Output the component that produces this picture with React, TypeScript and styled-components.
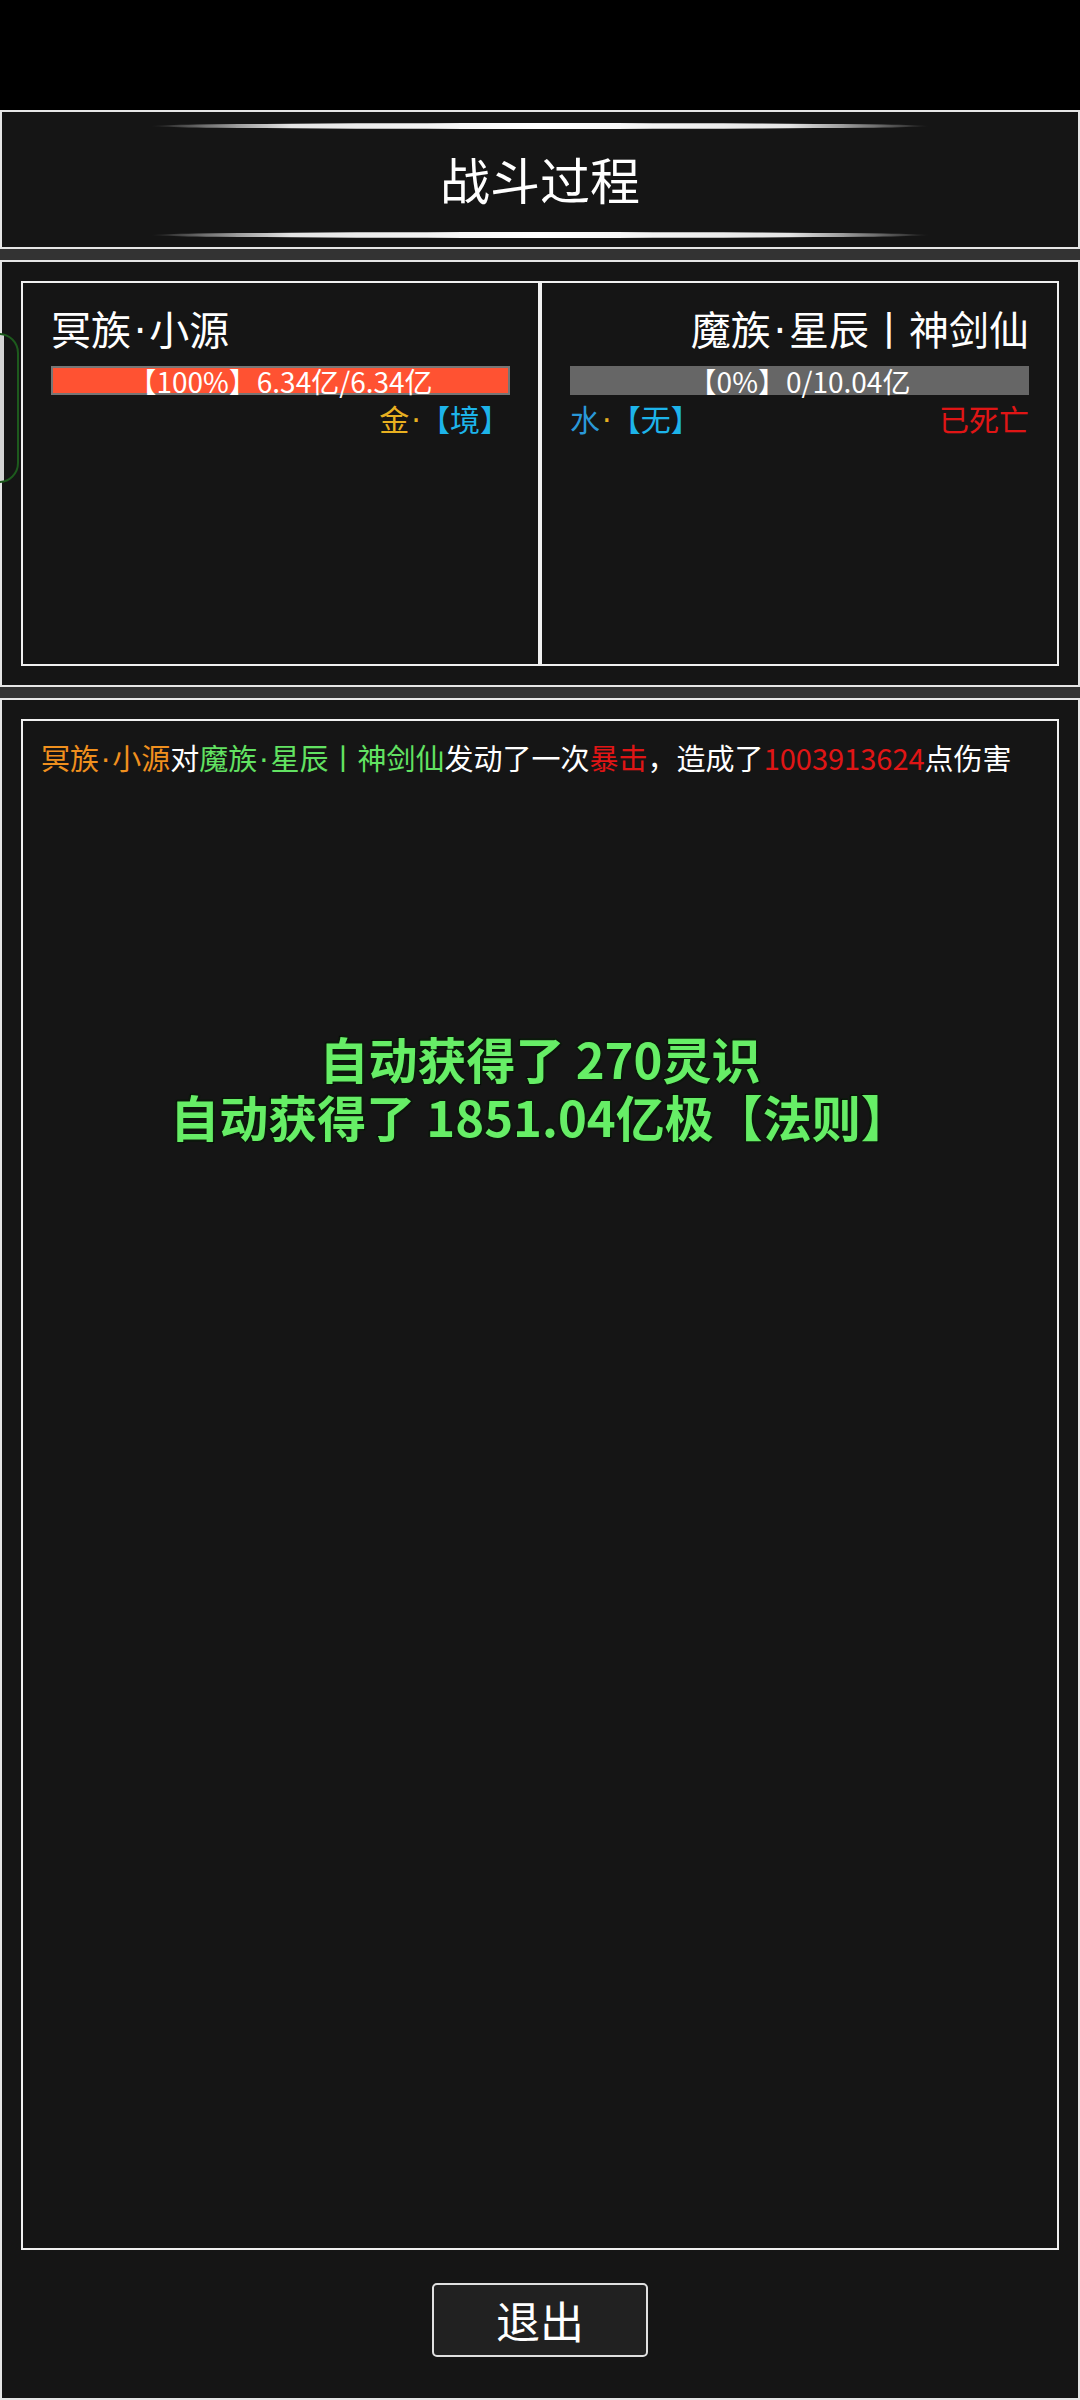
import React from "react";
import styled, { createGlobalStyle } from "styled-components";

const GlobalStyle = createGlobalStyle`
  html, body {
    margin: 0;
    padding: 0;
    background: #000;
  }
  body {
    font-family: "Noto Sans CJK SC", "Noto Sans", sans-serif;
  }
  #root {
    width: 1080px;
    height: 2400px;
    overflow: hidden;
  }
`;

const Page = styled.div`
  position: relative;
  width: 1080px;
  height: 2400px;
  box-sizing: border-box;
  padding-top: 110px;
  background: #000;
  display: flex;
  flex-direction: column;
`;

const Stack = styled.div`
  flex: 1;
  min-height: 0;
  background: #333;
  display: flex;
  flex-direction: column;
  gap: 11px;
`;

const Panel = styled.section`
  box-sizing: border-box;
  background: #151515;
  border: 2px solid #e6e6e6;
`;

const HeaderPanel = styled(Panel)`
  height: 139px;
  padding: 11px 0 9px;
  display: flex;
  flex-direction: column;
  align-items: center;
`;

const GlowLine = styled.div`
  width: 778px;
  height: 6px;
  border-radius: 50%;
  background: linear-gradient(
    90deg,
    rgba(255, 255, 255, 0) 0%,
    rgba(190, 190, 190, 0.55) 7%,
    rgba(240, 240, 240, 0.95) 18%,
    #fff 50%,
    rgba(240, 240, 240, 0.95) 82%,
    rgba(190, 190, 190, 0.55) 93%,
    rgba(255, 255, 255, 0) 100%
  );
`;

const Title = styled.h1`
  margin: 0;
  height: 103px;
  box-sizing: border-box;
  padding-bottom: 5px;
  line-height: 98px;
  font-size: 50px;
  font-weight: 400;
  color: #fff;
`;

const BattlePanel = styled(Panel)`
  height: 427px;
  padding: 19px;
`;

const Fighters = styled.div`
  display: grid;
  grid-template-columns: 1fr 1fr;
  height: 100%;
`;

const FighterCard = styled.div`
  box-sizing: border-box;
  border: 2px solid #f0f0f0;
  padding: 20px 28px 0;
  display: flex;
  flex-direction: column;
`;

const Name = styled.div<{ $align: "left" | "right" }>`
  font-size: 40px;
  line-height: 50px;
  color: #fff;
  white-space: nowrap;
  text-align: ${(p) => p.$align};
`;

const HpBar = styled.div<{ $fill: string; $edge: string }>`
  margin-top: 10px;
  height: 29px;
  box-sizing: border-box;
  border: 2px solid ${(p) => p.$edge};
  background: ${(p) => p.$fill};
  display: flex;
  align-items: center;
  justify-content: center;
  font-size: 28px;
  line-height: 1;
  color: #fff;
  white-space: nowrap;
`;

const ElementRow = styled.div<{ $justify: string }>`
  margin-top: 5px;
  font-size: 30px;
  line-height: 36px;
  display: flex;
  justify-content: ${(p) => p.$justify};
  white-space: nowrap;
`;

const Tint = styled.span<{ $c: string }>`
  color: ${(p) => p.$c};
`;

const Dot = styled.span<{ $c?: string; $after?: number }>`
  font-family: "DejaVu Sans", sans-serif;
  margin: 0 ${(p) => 0.07 + (p.$after ?? 0)}em 0 0.07em;
  color: ${(p) => p.$c ?? "inherit"};
`;

const LogPanel = styled(Panel)`
  flex: 1;
  min-height: 0;
  padding: 19px;
  display: flex;
  flex-direction: column;
  align-items: center;
`;

const LogBox = styled.div`
  position: relative;
  width: 100%;
  height: 1531px;
  flex-shrink: 0;
  box-sizing: border-box;
  border: 2px solid #f0f0f0;
  padding: 18px 18px;
`;

const LogLine = styled.p`
  margin: 0;
  font-size: 29px;
  line-height: 36px;
  color: #fff;
  white-space: nowrap;
`;

const RewardToast = styled.div`
  position: absolute;
  left: 0;
  right: 0;
  top: 308px;
  text-align: center;
  font-size: 49px;
  font-weight: 700;
  line-height: 58px;
  color: #66ee66;
  text-shadow: 2px 0 0 #0b1a0b, -2px 0 0 #0b1a0b, 0 2px 0 #0b1a0b,
    0 -2px 0 #0b1a0b, 1px 1px 1px #000, -1px -1px 1px #000;
`;

const ExitButton = styled.button`
  margin-top: 33px;
  width: 216px;
  height: 74px;
  box-sizing: border-box;
  border: 2px solid #e0e0e0;
  border-radius: 5px;
  background: #212121;
  color: #fff;
  font-family: inherit;
  font-size: 44px;
  line-height: 1;
  padding: 0;
`;

const SideTab = styled.div`
  position: absolute;
  top: 333px;
  left: -40px;
  width: 59px;
  height: 150px;
  box-sizing: border-box;
  border: 2px solid #1d5a1d;
  border-radius: 20px;
  background: linear-gradient(90deg, #d4d4d4 0 42px, #151515 42px);
`;

const GOLD = "#e8b020";
const CYAN = "#1db4ea";
const BLUE = "#2a98d8";
const RED = "#e01515";
const ORANGE = "#f0901e";
const GREEN = "#62e262";

export default function App() {
  return (
    <>
      <GlobalStyle />
      <Page>
        <Stack>
          <HeaderPanel>
            <GlowLine />
            <Title>战斗过程</Title>
            <GlowLine />
          </HeaderPanel>

          <BattlePanel>
            <Fighters>
              <FighterCard>
                <Name $align="left">
                  冥族<Dot>·</Dot>小源
                </Name>
                <HpBar $fill="#ff5232" $edge="#767676">
                  【100%】6.34亿/6.34亿
                </HpBar>
                <ElementRow $justify="flex-end">
                  <span>
                    <Tint $c={GOLD}>金</Tint>
                    <Dot $c={GOLD} $after={0.4}>·</Dot>
                    <Tint $c={CYAN}>【境】</Tint>
                  </span>
                </ElementRow>
              </FighterCard>
              <FighterCard>
                <Name $align="right">
                  魔族<Dot>·</Dot>星辰丨神剑仙
                </Name>
                <HpBar $fill="#666666" $edge="#666666">
                  【0%】0/10.04亿
                </HpBar>
                <ElementRow $justify="space-between">
                  <span>
                    <Tint $c={BLUE}>水</Tint>
                    <Dot $c={GOLD} $after={0.4}>·</Dot>
                    <Tint $c={CYAN}>【无】</Tint>
                  </span>
                  <Tint $c={RED}>已死亡</Tint>
                </ElementRow>
              </FighterCard>
            </Fighters>
          </BattlePanel>

          <LogPanel>
            <LogBox>
              <LogLine>
                <Tint $c={ORANGE}>
                  冥族<Dot>·</Dot>小源
                </Tint>
                对
                <Tint $c={GREEN}>
                  魔族<Dot>·</Dot>星辰丨神剑仙
                </Tint>
                发动了一次
                <Tint $c={RED}>暴击</Tint>，造成了
                <Tint $c={RED}>1003913624</Tint>点伤害
              </LogLine>
              <RewardToast>
                自动获得了 270灵识
                <br />
                自动获得了 1851.04亿极【法则】
              </RewardToast>
            </LogBox>
            <ExitButton type="button">退出</ExitButton>
          </LogPanel>
        </Stack>
        <SideTab />
      </Page>
    </>
  );
}
